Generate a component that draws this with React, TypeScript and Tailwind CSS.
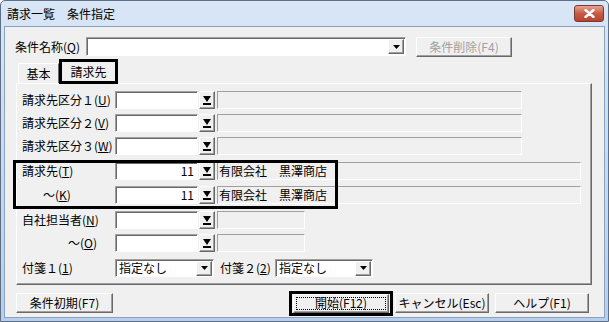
import type { ReactNode } from 'react'

const font = { fontFamily: '"Noto Sans CJK JP", "Noto Sans", sans-serif' }

const raised =
  'border border-t-white border-l-white border-b-[#696969] border-r-[#696969] shadow-[inset_-1px_-1px_0_#a0a0a0] bg-[#f0f0f0]'
const sunken =
  'border border-t-[#a0a0a0] border-l-[#a0a0a0] border-b-white border-r-white shadow-[inset_1px_1px_0_#696969]'
const flat = 'border border-t-[#a0a0a0] border-l-[#a0a0a0] border-b-white border-r-white bg-[#f0f0f0]'

function PickArrow() {
  return (
    <div className={`${raised} w-[16px] h-[18px] flex items-center justify-center shrink-0`}>
      <svg width="10" height="11" viewBox="0 0 10 11">
        <path d="M1 1h8L5 7z" fill="#000" />
        <rect x="1" y="8" width="8" height="2" fill="#000" />
      </svg>
    </div>
  )
}

function ComboArrow() {
  return (
    <div className={`${raised} w-[16px] h-[15px] flex items-center justify-center shrink-0`}>
      <svg width="7" height="4" viewBox="0 0 7 4">
        <path d="M0 0h7L3.5 4z" fill="#000" />
      </svg>
    </div>
  )
}

function Label({ children, w = 'w-[93px]' }: { children: ReactNode; w?: string }) {
  return <span className={`${w} shrink-0 text-[12px] leading-none text-black whitespace-nowrap`}>{children}</span>
}

function PickRow({
  label,
  value,
  name,
  fieldW,
  className,
}: {
  label: ReactNode
  value?: string
  name?: string
  fieldW: string
  className?: string
}) {
  return (
    <div className={`flex items-center h-[18px] ${className ?? ''}`}>
      <Label>{label}</Label>
      <div className={`${sunken} bg-white w-[83px] h-[18px] flex items-center justify-end pr-[3px] text-[12px] leading-none`}>
        {value}
      </div>
      <div className="ml-[1px]">
        <PickArrow />
      </div>
      <div className={`${flat} ${fieldW} ml-[2px] h-[18px] flex items-center pl-[1px] text-[12px] leading-none whitespace-pre`}>
        {name}
      </div>
    </div>
  )
}

function Button({ children, w, disabled }: { children: ReactNode; w: string; disabled?: boolean }) {
  return (
    <div
      className={`${raised} ${w} h-[20px] flex items-center justify-center text-[12px] leading-none ${
        disabled ? 'text-[#a0a0a0]' : 'text-black'
      }`}
    >
      {children}
    </div>
  )
}

export default function App() {
  return (
    <div
      style={font}
      className="w-[609px] h-[322px] flex flex-col border border-[#5c6f86] rounded-t-[5px] bg-gradient-to-b from-[#d9e6f6] to-[#b7cfeb] overflow-hidden"
    >
      {/* title bar */}
      <div className="h-[25px] flex items-center justify-between pl-[6px] pr-[4px] shrink-0">
        <span className="text-[12px] leading-none text-black">請求一覧　条件指定</span>
        <div className="w-[30px] h-[17px] rounded-[3px] border border-[#7a3a30] bg-gradient-to-b from-[#e8a493] via-[#c75a44] to-[#b8442e] flex items-center justify-center">
          <svg width="11" height="9" viewBox="0 0 11 9">
            <path d="M1.5 1l8 7M9.5 1l-8 7" stroke="#fff" strokeWidth="2.4" strokeLinecap="round" />
          </svg>
        </div>
      </div>

      {/* body */}
      <div className="flex-1 mx-[3px] mb-[3px] border border-[#8aa2bf] bg-[#f0f0f0] flex flex-col relative">
        {/* condition name row */}
        <div className="flex items-center h-[19px] mt-[10px] pl-[10px]">
          <span className="w-[71px] text-[12px] leading-none">
            条件名称(<u>Q</u>)
          </span>
          <div className={`${sunken} bg-white w-[320px] h-[19px] flex items-center justify-end pr-[1px]`}>
            <ComboArrow />
          </div>
          <div className="ml-[10px]">
            <Button w="w-[96px]" disabled>
              条件削除(F4)
            </Button>
          </div>
        </div>

        {/* tabs */}
        <div className="flex items-end h-[24px] mt-[3px] ml-[13px]">
          <div className="w-[41px] h-[20px] border border-b-0 border-t-white border-l-white border-r-[#696969] flex items-center justify-center text-[12px] leading-none">
            基本
          </div>
          <div className="w-[59px] h-[25px] -mb-[1px] border-[3px] border-black bg-[#f0f0f0] flex items-center justify-center text-[12px] leading-none relative z-10">
            請求先
          </div>
        </div>

        {/* tab panel */}
        <div className="ml-[11px] w-[576px] h-[202px] border border-t-white border-l-white border-b-[#696969] border-r-[#696969] shadow-[inset_-1px_-1px_0_#a0a0a0] pl-[5px] pt-[7px] relative">
          <PickRow label={<>請求先区分１(<u>U</u>)</>} fieldW="w-[305px]" />
          <PickRow label={<>請求先区分２(<u>V</u>)</>} fieldW="w-[305px]" className="mt-[5px]" />
          <PickRow label={<>請求先区分３(<u>W</u>)</>} fieldW="w-[305px]" className="mt-[5px]" />
          <PickRow
            label={<>請求先(<u>T</u>)</>}
            value="11"
            name="有限会社　黒澤商店"
            fieldW="w-[364px]"
            className="mt-[7px]"
          />
          <PickRow
            label={<span className="pl-[21px]">～(<u>K</u>)</span>}
            value="11"
            name="有限会社　黒澤商店"
            fieldW="w-[364px]"
            className="mt-[6px]"
          />
          <PickRow label={<>自社担当者(<u>N</u>)</>} fieldW="w-[88px]" className="mt-[7px]" />
          <PickRow
            label={<span className="pl-[46px]">～(<u>O</u>)</span>}
            fieldW="w-[88px]"
            className="mt-[5px]"
          />
          <div className="flex items-center h-[18px] mt-[7px]">
            <Label>
              付箋１(<u>1</u>)
            </Label>
            <div className={`${sunken} bg-white w-[99px] h-[18px] flex items-center justify-between pl-[3px] pr-[1px] text-[12px] leading-none`}>
              <span>指定なし</span>
              <ComboArrow />
            </div>
            <span className="ml-[6px] w-[55px] text-[12px] leading-none whitespace-nowrap">
              付箋２(<u>2</u>)
            </span>
            <div className={`${sunken} bg-white w-[98px] h-[18px] flex items-center justify-between pl-[3px] pr-[1px] text-[12px] leading-none`}>
              <span>指定なし</span>
              <ComboArrow />
            </div>
          </div>

          {/* highlight around 請求先 rows */}
          <div className="absolute left-[-4px] top-[76px] w-[325px] h-[49px] border-[3px] border-black pointer-events-none" />
        </div>

        {/* bottom buttons */}
        <div className="flex items-center mt-[6px] ml-[11px] h-[24px]">
          <Button w="w-[97px]">条件初期(F7)</Button>
          <div className="ml-[176px] w-[104px] h-[25px] border-[3px] border-black flex items-center justify-center">
            <div className={`${raised} w-[96px] h-[19px] flex items-center justify-center p-[2px]`}>
              <div className="w-full h-full border border-dotted border-black flex items-center justify-center text-[12px] leading-none">
                開始(F12)
              </div>
            </div>
          </div>
          <div className="ml-[2px]">
            <Button w="w-[94px]">キャンセル(Esc)</Button>
          </div>
          <div className="ml-[6px]">
            <Button w="w-[94px]">ヘルプ(F1)</Button>
          </div>
        </div>
      </div>
    </div>
  )
}
